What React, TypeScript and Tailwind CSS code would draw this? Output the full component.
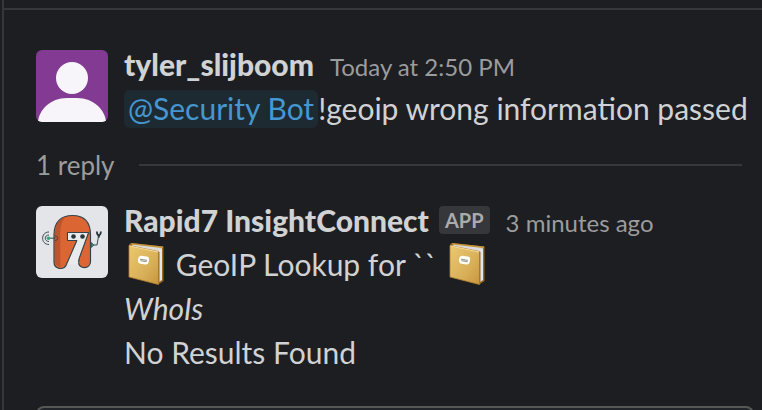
import type { ReactNode } from "react";

function UserAvatar() {
  return (
    <svg viewBox="0 0 72 72" className="size-[72px] shrink-0 rounded-md" role="img" aria-label="tyler_slijboom">
      <rect width="72" height="72" fill="#823a93" />
      <circle cx="36" cy="28" r="16" fill="#f7f5fa" />
      <path d="M2 72C3 60 14 48 31 48h10c17 0 28 12 29 24z" fill="#f7f5fa" />
    </svg>
  );
}

function BotAvatar() {
  return (
    <svg viewBox="0 0 72 72" className="size-[72px] shrink-0 rounded-md" role="img" aria-label="Rapid7 InsightConnect">
      <rect width="72" height="72" fill="#e4e5e9" />
      <path
        d="M18 29C18 16 25 9.500 36.500 9.500S54.500 16 54.500 29V55.500c0 8-12 8-12 .5 0-3 1.500-6 2.500-9l7.500-20.500H31.500v8H41L30.500 58.500C27.500 65 18 63 18 56z"
        fill="#dc6633"
        stroke="#34444a"
        strokeWidth="1.200"
        strokeLinejoin="round"
      />
      <path d="M18.800 29c0-10 4-16 11-18.500-4.500 5-5.500 11-5.500 19V61c-3.500-1-5.500-3-5.500-6z" fill="#bd542b" />
      <path d="M31.500 26.500h21L45 47c-1 3-2.500 6-2.500 9l-1 2.500h-11L41 34.500h-9.500z" fill="#e9eaec" />
      <path d="M42.500 56c0-3 1.500-6 2.500-9l7.500-20.500H31.500v8H41L30.500 58.500" fill="none" stroke="#34444a" />
      <circle cx="37.500" cy="30.500" r="2.300" fill="#27363c" />
      <circle cx="46.500" cy="30.500" r="2.300" fill="#27363c" />
      <g fill="none" stroke="#3b494e" strokeWidth="1">
        <path d="M13 26c-8.500 0-8.500 12.500 0 12.500M13 29c-5 0-5 6.500 0 6.500M14 32.200h5" />
        <path d="M19 30c3.500 0 3.500 4.500 0 4.500" />
        <path d="M57.500 39h3.500L62.500 30" />
      </g>
      <circle cx="12.500" cy="32.200" r="1.800" fill="#39a37c" />
      <path d="M55.300 36.500l2.500 2.500-2.500 2.500z" fill="#39a37c" stroke="#34554d" />
      <path d="M61 25.500c-.5 5 4 5 3.800 0" fill="none" stroke="#26343a" strokeWidth="1.800" />
      <path d="M62.800 29v2.500" fill="none" stroke="#26343a" strokeWidth="2" />
    </svg>
  );
}

function NotebookEmoji() {
  return (
    <svg viewBox="0 -1 44 44" className="inline-block size-11 align-top" role="img" aria-label="notebook">
      <defs>
        <linearGradient id="cover" x1="0" y1="0" x2="1" y2="1">
          <stop offset="0" stopColor="#eac86f" />
          <stop offset="0.600" stopColor="#d9b05a" />
          <stop offset="1" stopColor="#c8963c" />
        </linearGradient>
        <linearGradient id="pages" x1="0" y1="0" x2="1" y2="0">
          <stop offset="0" stopColor="#aaaab2" />
          <stop offset="1" stopColor="#e8e7eb" />
        </linearGradient>
      </defs>
      <path d="M5 1.500 7 0l32.500 3.500V38L35 41z" fill="#986820" />
      <path d="M7.500 1.500 38 5v32l-3 2V9z" fill="url(#pages)" />
      <path d="M7 0 39 3.500V5L36 6 8 2z" fill="#c4953c" />
      <path d="M9 1.800 37.500 5 34.500 8.500 7 3z" fill="#dcdbdc" />
      <path d="M5 2.500 34.500 8.500V41.500L5 34z" fill="url(#cover)" stroke="#b6822c" strokeWidth="0.800" />
      <path d="M5.500 3 34 9" stroke="#f7df99" />
      <path d="M35 9v31" stroke="#9d712a" />
      <rect x="14" y="13" width="11" height="8" rx="3" fill="#fffef8" transform="rotate(8 19 17)" />
      <path d="M16 16.200l7 1.200M16.500 17.700l6 1" stroke="#85827b" strokeWidth="0.900" />
    </svg>
  );
}

type MessageProps = {
  avatar: ReactNode;
  author: string;
  time: string;
  app?: boolean;
  children: ReactNode;
};

function Message({ avatar, author, time, app, children }: MessageProps) {
  return (
    <article className="flex gap-4">
      <div className="pt-2">{avatar}</div>
      <div className="min-w-0 flex-1 whitespace-nowrap text-[30px] leading-[44px]">
        <header className="flex h-11 items-baseline">
          <h2 className="font-black">{author}</h2>
          {app && (
            <span className="ml-2.5 self-center rounded bg-[#35373b] px-1.5 text-xl leading-7 font-bold text-[#ababad]">
              APP
            </span>
          )}
          <time className="ml-4 text-2xl leading-[44px] text-[#9b9c9e]">{time}</time>
        </header>
        {children}
      </div>
    </article>
  );
}

export default function App() {
  return (
    <div className="h-screen overflow-hidden bg-[#1d1e21] pl-0.5 font-[Lato,sans-serif] text-[#d1d2d3]">
      <main className="h-full border-l-2 border-[#35373b] pt-2">
        <div className="border-t-2 border-[#35373b] pt-8 pl-8">
          <Message avatar={<UserAvatar />} author="tyler_slijboom" time="Today at 2:50 PM">
            <p>
              <a href="#security-bot" className="rounded-md bg-[#1e2a31] px-1 pb-0.5 text-[#4596d1]">@Security Bot</a>
              !geoip wrong information passed
            </p>
          </Message>
          <div className="flex h-[68px] items-center gap-6 pt-0.5 pr-5">
            <span className="text-[26px] leading-8 text-[#9b9c9e]">1 reply</span>
            <hr className="flex-1 border-t-2 border-[#35373b]" />
          </div>
          <Message avatar={<BotAvatar />} author="Rapid7 InsightConnect" time="3 minutes ago" app>
            <p>
              <NotebookEmoji /> GeoIP Lookup for `` <NotebookEmoji />
            </p>
            <p className="italic">WhoIs</p>
            <p>No Results Found</p>
          </Message>
          <div className="pt-8 pr-2">
            <textarea
              aria-label="Reply"
              className="block h-20 w-full resize-none rounded-lg border-2 border-[#565856] bg-[#222529] p-4"
            />
          </div>
        </div>
      </main>
    </div>
  );
}
